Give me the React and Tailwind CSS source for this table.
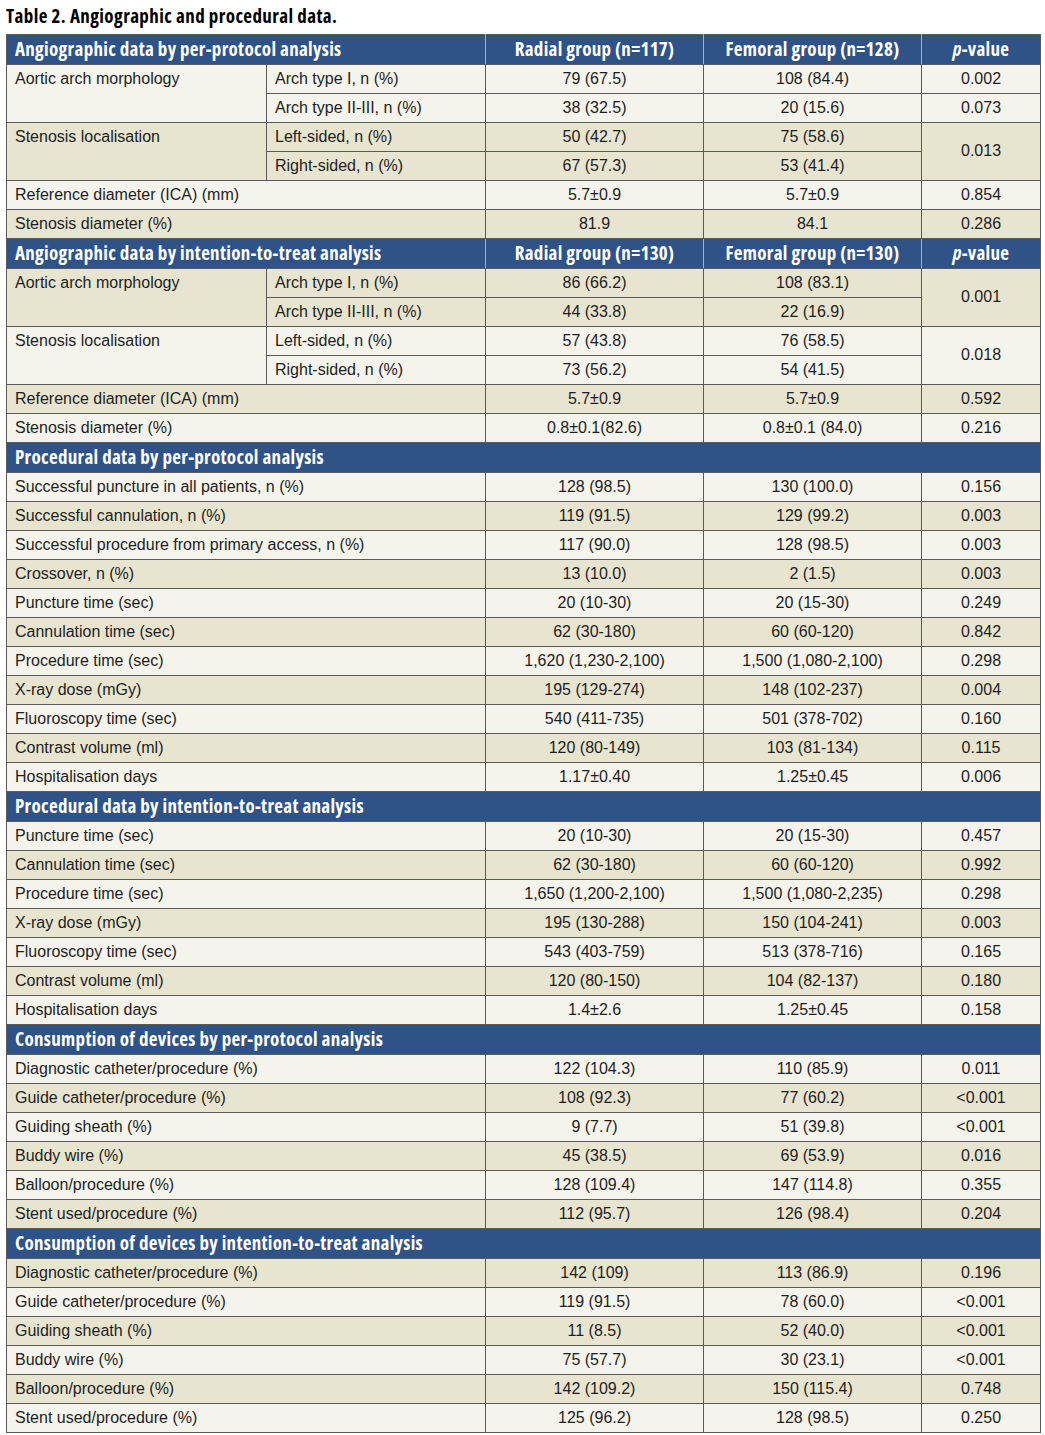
import React from "react";

const LIGHT = "bg-[#f4f3ec]";
const TAN = "bg-[#e7e4d0]";

const cell = "border border-[#5a5a5a] px-2 text-[16px] leading-none";
const head = "font-['Open_Sans',sans-serif] font-stretch-[75%] font-bold text-[19px] tracking-[0.3px] text-white";

const ColHeader = ({ title, radial, femoral, h = "h-[30px]" }) => (
  <tr className={`${h} bg-[#2f5287]`}>
    <td colSpan={2} className={`${head} border border-[#5a5a5a] border-r-[#9fb1cc] px-2`}>{title}</td>
    <td className={`${head} border border-[#5a5a5a] border-x-[#9fb1cc] text-center`}>{radial}</td>
    <td className={`${head} border border-[#5a5a5a] border-x-[#9fb1cc] text-center`}>{femoral}</td>
    <td className={`${head} border border-[#5a5a5a] border-l-[#9fb1cc] text-center`}>
      <i>p</i>-value
    </td>
  </tr>
);

const SectionHeader = ({ title }) => (
  <tr className="h-[30px] bg-[#2f5287]">
    <td colSpan={5} className={`${head} border border-[#5a5a5a] px-2`}>{title}</td>
  </tr>
);

const Row = ({ label, a, b, p, tone }) => (
  <tr className={`h-[29px] ${tone}`}>
    <td colSpan={2} className={cell}>{label}</td>
    <td className={`${cell} text-center`}>{a}</td>
    <td className={`${cell} text-center`}>{b}</td>
    <td className={`${cell} text-center`}>{p}</td>
  </tr>
);

// two sub-rows sharing one label, p-value merged when given
const Group = ({ label, subs, tone, mergedP }) => (
  <>
    {subs.map((s, i) => (
      <tr key={s[0]} className={`h-[29px] ${tone}`}>
        {i === 0 && (
          <td rowSpan={2} className={`${cell} align-top pt-[6px]`}>{label}</td>
        )}
        <td className={cell}>{s[0]}</td>
        <td className={`${cell} text-center`}>{s[1]}</td>
        <td className={`${cell} text-center`}>{s[2]}</td>
        {mergedP ? (
          i === 0 && <td rowSpan={2} className={`${cell} text-center`}>{mergedP}</td>
        ) : (
          <td className={`${cell} text-center`}>{s[3]}</td>
        )}
      </tr>
    ))}
  </>
);

const procPP = [
  ["Successful puncture in all patients, n (%)", "128 (98.5)", "130 (100.0)", "0.156"],
  ["Successful cannulation, n (%)", "119 (91.5)", "129 (99.2)", "0.003"],
  ["Successful procedure from primary access, n (%)", "117 (90.0)", "128 (98.5)", "0.003"],
  ["Crossover, n (%)", "13 (10.0)", "2 (1.5)", "0.003"],
  ["Puncture time (sec)", "20 (10-30)", "20 (15-30)", "0.249"],
  ["Cannulation time (sec)", "62 (30-180)", "60 (60-120)", "0.842"],
  ["Procedure time (sec)", "1,620 (1,230-2,100)", "1,500 (1,080-2,100)", "0.298"],
  ["X-ray dose (mGy)", "195 (129-274)", "148 (102-237)", "0.004"],
  ["Fluoroscopy time (sec)", "540 (411-735)", "501 (378-702)", "0.160"],
  ["Contrast volume (ml)", "120 (80-149)", "103 (81-134)", "0.115"],
  ["Hospitalisation days", "1.17±0.40", "1.25±0.45", "0.006"],
];

const procITT = [
  ["Puncture time (sec)", "20 (10-30)", "20 (15-30)", "0.457"],
  ["Cannulation time (sec)", "62 (30-180)", "60 (60-120)", "0.992"],
  ["Procedure time (sec)", "1,650 (1,200-2,100)", "1,500 (1,080-2,235)", "0.298"],
  ["X-ray dose (mGy)", "195 (130-288)", "150 (104-241)", "0.003"],
  ["Fluoroscopy time (sec)", "543 (403-759)", "513 (378-716)", "0.165"],
  ["Contrast volume (ml)", "120 (80-150)", "104 (82-137)", "0.180"],
  ["Hospitalisation days", "1.4±2.6", "1.25±0.45", "0.158"],
];

const devPP = [
  ["Diagnostic catheter/procedure (%)", "122 (104.3)", "110 (85.9)", "0.011"],
  ["Guide catheter/procedure (%)", "108 (92.3)", "77 (60.2)", "<0.001"],
  ["Guiding sheath (%)", "9 (7.7)", "51 (39.8)", "<0.001"],
  ["Buddy wire (%)", "45 (38.5)", "69 (53.9)", "0.016"],
  ["Balloon/procedure (%)", "128 (109.4)", "147 (114.8)", "0.355"],
  ["Stent used/procedure (%)", "112 (95.7)", "126 (98.4)", "0.204"],
];

const devITT = [
  ["Diagnostic catheter/procedure (%)", "142 (109)", "113 (86.9)", "0.196"],
  ["Guide catheter/procedure (%)", "119 (91.5)", "78 (60.0)", "<0.001"],
  ["Guiding sheath (%)", "11 (8.5)", "52 (40.0)", "<0.001"],
  ["Buddy wire (%)", "75 (57.7)", "30 (23.1)", "<0.001"],
  ["Balloon/procedure (%)", "142 (109.2)", "150 (115.4)", "0.748"],
  ["Stent used/procedure (%)", "125 (96.2)", "128 (98.5)", "0.250"],
];

const rows = (list, startTan) =>
  list.map((r, i) => (
    <Row
      key={r[0]}
      label={r[0]}
      a={r[1]}
      b={r[2]}
      p={r[3]}
      tone={(i % 2 === 0) === startTan ? TAN : LIGHT}
    />
  ));

export default function App() {
  return (
    <div className="bg-white min-h-screen pl-[6px] pr-[5px] pt-[4px] font-['Liberation_Sans',Arial,sans-serif] text-[#1e1e1e]">
      <h1 className="font-['Open_Sans',sans-serif] font-stretch-[75%] font-bold text-[19px] tracking-[0.4px] text-black leading-[24px] mb-[6px]">
        Table 2. Angiographic and procedural data.
      </h1>
      <table className="w-[1034px] border-collapse table-fixed">
        <colgroup>
          <col className="w-[260px]" />
          <col className="w-[219px]" />
          <col className="w-[218px]" />
          <col className="w-[218px]" />
          <col className="w-[119px]" />
        </colgroup>
        <tbody>
          <ColHeader
            h="h-[29px]"
            title="Angiographic data by per-protocol analysis"
            radial="Radial group (n=117)"
            femoral="Femoral group (n=128)"
          />
          <Group
            label="Aortic arch morphology"
            tone={LIGHT}
            subs={[
              ["Arch type I, n (%)", "79 (67.5)", "108 (84.4)", "0.002"],
              ["Arch type II-III, n (%)", "38 (32.5)", "20 (15.6)", "0.073"],
            ]}
          />
          <Group
            label="Stenosis localisation"
            tone={TAN}
            mergedP="0.013"
            subs={[
              ["Left-sided, n (%)", "50 (42.7)", "75 (58.6)"],
              ["Right-sided, n (%)", "67 (57.3)", "53 (41.4)"],
            ]}
          />
          <Row label="Reference diameter (ICA) (mm)" a="5.7±0.9" b="5.7±0.9" p="0.854" tone={LIGHT} />
          <Row label="Stenosis diameter (%)" a="81.9" b="84.1" p="0.286" tone={TAN} />

          <ColHeader
            title="Angiographic data by intention-to-treat analysis"
            radial="Radial group (n=130)"
            femoral="Femoral group (n=130)"
          />
          <Group
            label="Aortic arch morphology"
            tone={TAN}
            mergedP="0.001"
            subs={[
              ["Arch type I, n (%)", "86 (66.2)", "108 (83.1)"],
              ["Arch type II-III, n (%)", "44 (33.8)", "22 (16.9)"],
            ]}
          />
          <Group
            label="Stenosis localisation"
            tone={LIGHT}
            mergedP="0.018"
            subs={[
              ["Left-sided, n (%)", "57 (43.8)", "76 (58.5)"],
              ["Right-sided, n (%)", "73 (56.2)", "54 (41.5)"],
            ]}
          />
          <Row label="Reference diameter (ICA) (mm)" a="5.7±0.9" b="5.7±0.9" p="0.592" tone={TAN} />
          <Row label="Stenosis diameter (%)" a="0.8±0.1(82.6)" b="0.8±0.1 (84.0)" p="0.216" tone={LIGHT} />

          <SectionHeader title="Procedural data by per-protocol analysis" />
          {rows(procPP, false)}

          <SectionHeader title="Procedural data by intention-to-treat analysis" />
          {rows(procITT, false)}

          <SectionHeader title="Consumption of devices by per-protocol analysis" />
          {rows(devPP, false)}

          <SectionHeader title="Consumption of devices by intention-to-treat analysis" />
          {rows(devITT, true)}
        </tbody>
      </table>
    </div>
  );
}
